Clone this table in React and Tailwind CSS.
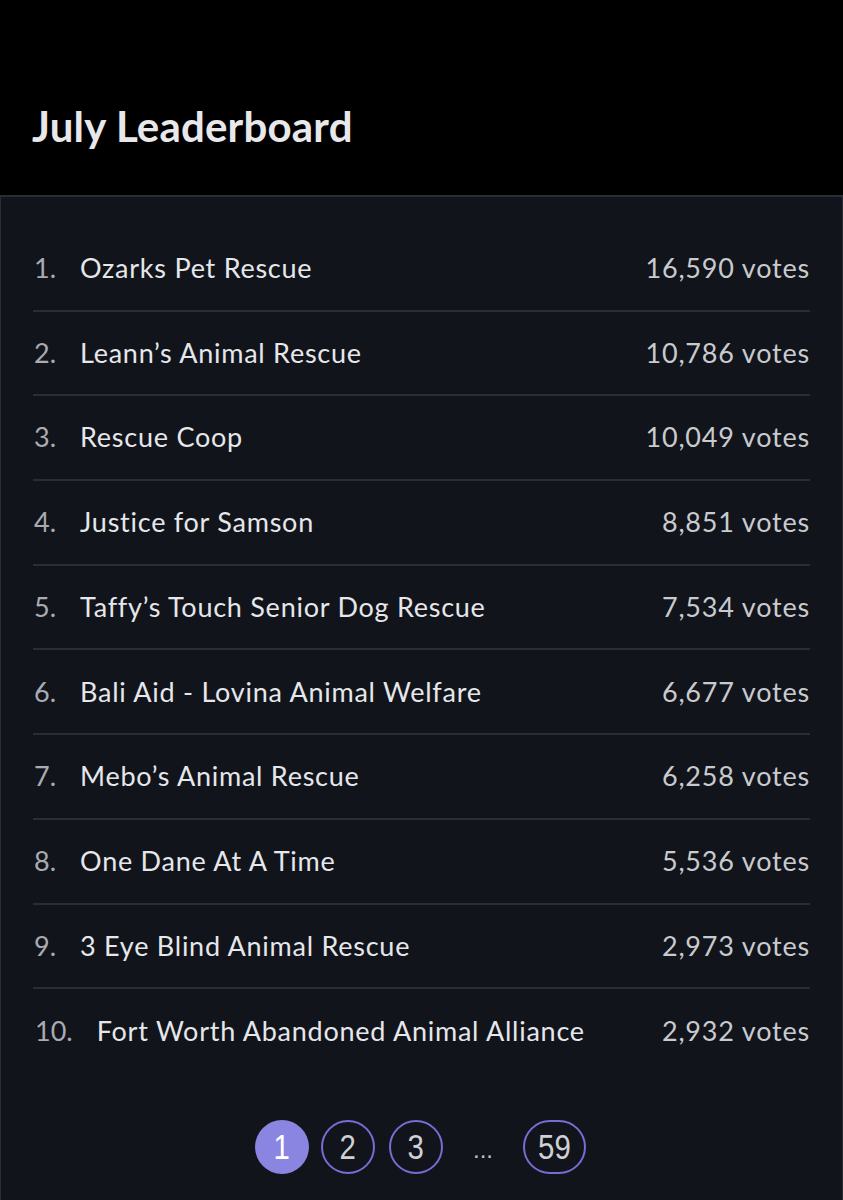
import React from "react";

const rows = [
  ["1.", "Ozarks Pet Rescue", "16,590 votes"],
  ["2.", "Leann’s Animal Rescue", "10,786 votes"],
  ["3.", "Rescue Coop", "10,049 votes"],
  ["4.", "Justice for Samson", "8,851 votes"],
  ["5.", "Taffy’s Touch Senior Dog Rescue", "7,534 votes"],
  ["6.", "Bali Aid - Lovina Animal Welfare", "6,677 votes"],
  ["7.", "Mebo’s Animal Rescue", "6,258 votes"],
  ["8.", "One Dane At A Time", "5,536 votes"],
  ["9.", "3 Eye Blind Animal Rescue", "2,973 votes"],
  ["10.", "Fort Worth Abandoned Animal Alliance", "2,932 votes"],
];

function Page({ label, active, wide }) {
  return (
    <div
      className={`${wide ? "w-[63px]" : "w-[54px]"} h-[54px] rounded-full flex items-center justify-center ${
        active ? "bg-[#8b85e2] text-white" : "border-2 border-[#766ed6] text-[#d0d0d4]"
      }`}
    >
      <span className="text-[35px] leading-none inline-block scale-x-[0.84]">{label}</span>
    </div>
  );
}

export default function App() {
  return (
    <div className="w-[843px] h-[1200px] bg-black flex flex-col overflow-hidden" style={{ fontFamily: "Lato, 'Open Sans', sans-serif" }}>
      <div className="h-[195px] shrink-0 flex items-end pl-[32px] pb-[48px]">
        <h1 className="text-[42px] leading-none font-bold text-[#e8e8ea] tracking-[0.2px]">July Leaderboard</h1>
      </div>
      <div className="flex-1 bg-[#11141b] border-t-2 border-l border-r border-[#2a2d35] px-[32px] pt-[30px]">
        {rows.map(([n, name, votes], i) => (
          <div
            key={n}
            className={`h-[84.7px] flex items-center justify-between ${i < rows.length - 1 ? "border-b-2 border-[#2a2d38]" : ""}`}
          >
            <div className="flex items-center gap-[24px]">
              <span className={`text-[27px] text-[#a9abb2] ${i === 9 ? "pl-[2px]" : "pl-[1px]"}`}>{n}</span>
              <span className="text-[27px] tracking-[0.75px] text-[#e6e7ea]">{name}</span>
            </div>
            <span className="text-[27px] tracking-[0.8px] text-[#c9cace]">{votes}</span>
          </div>
        ))}
        <div className="flex items-center justify-center mt-[46px] pr-[2px]" style={{ fontFamily: "'Liberation Sans', Arial, sans-serif" }}>
          <div className="flex items-center">
            <Page label="1" active />
            <div className="ml-[12px]"><Page label="2" /></div>
            <div className="ml-[14px]"><Page label="3" /></div>
            <div className="mx-[29px] w-[22px] text-center text-[24px] text-[#c0c0c4] leading-none pt-[6px]">...</div>
            <Page label="59" wide />
          </div>
        </div>
      </div>
    </div>
  );
}
